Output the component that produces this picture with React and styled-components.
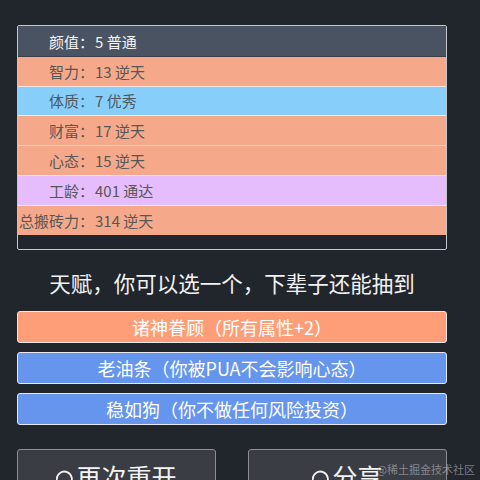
import React from "react";
import styled, { createGlobalStyle } from "styled-components";

const Global = createGlobalStyle`
  html, body {
    margin: 0;
    padding: 0;
    background: #21252c;
    overflow: hidden;
  }
  body {
    font-family: "Noto Sans CJK SC", "Microsoft YaHei", "Noto Sans", sans-serif;
  }
`;

const Page = styled.div`
  position: relative;
  width: 480px;
  height: 480px;
  overflow: hidden;
  box-sizing: border-box;
  padding: 25px 33px 0 17px;
`;

const Panel = styled.div`
  border: 1px solid #c3c6cb;
  border-radius: 2px;
  padding-bottom: 14px;
  background: #21262e;
`;

const Row = styled.div`
  display: flex;
  align-items: center;
  height: 28.8px;
  border-top: 1px solid ${(p) => p.$line};
  background: ${(p) => p.$bg};
  color: ${(p) => p.$fg};
  font-size: 15px;
  line-height: 1;
`;

const Label = styled.span`
  width: 76px;
  text-align: right;
  white-space: nowrap;
`;

const Value = styled.span`
  padding-left: 1px;
  white-space: nowrap;
`;

const Title = styled.div`
  margin-top: 18px;
  height: 30px;
  line-height: 30px;
  text-align: center;
  color: #f2f2f2;
  font-size: 21.5px;
`;

const Talents = styled.div`
  display: flex;
  flex-direction: column;
  gap: 9px;
  margin-top: 13px;
`;

const Talent = styled.div`
  height: 32px;
  box-sizing: border-box;
  border: 1px solid #e6e8ec;
  border-radius: 3px;
  background: ${(p) => p.$bg};
  color: #ffffff;
  font-size: 18px;
  display: flex;
  align-items: center;
  justify-content: center;
  white-space: nowrap;
`;

const Actions = styled.div`
  display: grid;
  grid-template-columns: 1fr 1fr;
  gap: 32px;
  margin-top: 24px;
`;

const ActionButton = styled.div`
  height: 60px;
  box-sizing: border-box;
  border: 1px solid #8b8e94;
  border-radius: 3px;
  background: #3a3d44;
  color: #f4f4f4;
  font-size: 25px;
  display: flex;
  justify-content: center;
  align-items: flex-start;
  padding-top: 9px;
  gap: 1px;
  line-height: 34px;
`;

const IconWrap = styled.span`
  display: flex;
  align-items: center;
  height: 34px;
  padding-top: 8px;
  box-sizing: border-box;
`;

const Watermark = styled.div`
  position: absolute;
  right: 5px;
  bottom: 3px;
  font-size: 11px;
  color: rgba(200, 200, 205, 0.55);
  white-space: nowrap;
`;

const RefreshIcon = () => (
  <svg width="19" height="19" viewBox="0 0 19 19" fill="none">
    <path
      d="M4.2 15.6 A7.6 7.6 0 1 1 6.6 16.6"
      stroke="#f0f0f0"
      strokeWidth="1.8"
      strokeLinecap="round"
    />
  </svg>
);

const rows = [
  { label: "颜值：", value: "5 普通", bg: "#4a5361", fg: "#f3f3f3", line: "#4a5361" },
  { label: "智力：", value: "13 逆天", bg: "#f6a98a", fg: "#575757", line: "#3a3f47" },
  { label: "体质：", value: "7 优秀", bg: "#87cefa", fg: "#4d5a63", line: "#f2e6e2" },
  { label: "财富：", value: "17 逆天", bg: "#f6a98a", fg: "#575757", line: "#e8eef4" },
  { label: "心态：", value: "15 逆天", bg: "#f6a98a", fg: "#575757", line: "#f8d3c4" },
  { label: "工龄：", value: "401 通达", bg: "#e5bdfd", fg: "#575757", line: "#f2e4ea" },
  { label: "总搬砖力：", value: "314 逆天", bg: "#f6a98a", fg: "#575757", line: "#f0eaf4" },
];

const talents = [
  { text: "诸神眷顾（所有属性+2）", bg: "#fe9e79" },
  { text: "老油条（你被PUA不会影响心态）", bg: "#6595ec" },
  { text: "稳如狗（你不做任何风险投资）", bg: "#6595ec" },
];

export default function App() {
  return (
    <>
      <Global />
      <Page>
        <Panel>
          {rows.map((r) => (
            <Row key={r.label} $bg={r.bg} $fg={r.fg} $line={r.line}>
              <Label>{r.label}</Label>
              <Value>{r.value}</Value>
            </Row>
          ))}
        </Panel>
        <Title>天赋，你可以选一个，下辈子还能抽到</Title>
        <Talents>
          {talents.map((t) => (
            <Talent key={t.text} $bg={t.bg}>
              {t.text}
            </Talent>
          ))}
        </Talents>
        <Actions>
          <ActionButton>
            <IconWrap>
              <RefreshIcon />
            </IconWrap>
            再次重开
          </ActionButton>
          <ActionButton>
            <IconWrap>
              <RefreshIcon />
            </IconWrap>
            分享
          </ActionButton>
        </Actions>
        <Watermark>@稀土掘金技术社区</Watermark>
      </Page>
    </>
  );
}
